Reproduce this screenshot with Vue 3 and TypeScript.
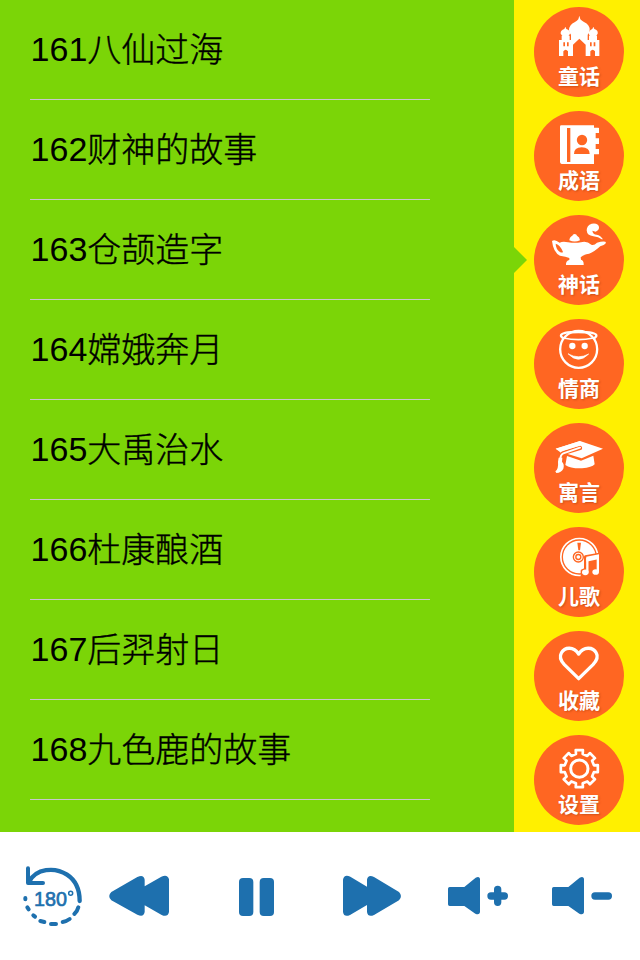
<script setup lang="ts">
import { ref } from 'vue'

interface Story { id: number; title: string }
interface Category { key: string; label: string }

const stories: Story[] = [
  { id: 161, title: '八仙过海' },
  { id: 162, title: '财神的故事' },
  { id: 163, title: '仓颉造字' },
  { id: 164, title: '嫦娥奔月' },
  { id: 165, title: '大禹治水' },
  { id: 166, title: '杜康酿酒' },
  { id: 167, title: '后羿射日' },
  { id: 168, title: '九色鹿的故事' },
]

const categories: Category[] = [
  { key: 'castle', label: '童话' },
  { key: 'book', label: '成语' },
  { key: 'lamp', label: '神话' },
  { key: 'angel', label: '情商' },
  { key: 'cap', label: '寓言' },
  { key: 'disc', label: '儿歌' },
  { key: 'heart', label: '收藏' },
  { key: 'gear', label: '设置' },
]

const active = ref('lamp')

/* Outline of an eight-toothed cog centred on (208, 122). */
function cogPath(): string {
  const points: string[] = []
  const profile: [number, number][] = [[-13, 45], [-11, 56.5], [11, 56.5], [13, 45]]
  for (let i = 0; i < 8; i++) {
    for (const [offset, radius] of profile) {
      const a = ((i * 45 + offset) * Math.PI) / 180
      points.push(`${(208 + radius * Math.sin(a)).toFixed(1)} ${(122 - radius * Math.cos(a)).toFixed(1)}`)
    }
  }
  return `M${points.join('L')}Z`
}
</script>

<template>
  <div class="app">
    <div class="main">
      <ul class="stories">
        <li v-for="s in stories" :key="s.id" class="story"><span>{{ s.id }}</span><span class="title">{{ s.title }}</span></li>
      </ul>
      <nav class="side">
        <div
          v-for="c in categories"
          :key="c.key"
          class="slot"
          :class="{ active: c.key === active }"
          @click="active = c.key"
        >
          <button class="category">
            <svg class="icon" viewBox="72 21 270 270">
              <g v-if="c.key === 'castle'" fill="#fff">
                <path d="M208 47L211 58Q216 63 222 66Q240 74 239 91Q238 99 233 104V120H268V168H227V134L208 116L189 134V168H147V120H183V104Q178 99 177 91Q177 74 195 66Q201 63 205 58Z" />
                <path d="M166 80L169 87Q181 90 180 101L175 109H158L152 101Q151 90 163 87ZM250 80L253 87Q265 91 263 101L258 109H240L236 101Q237 90 247 87Z" />
                <path d="M155 107H179V122H155ZM237 107H261V122H237Z" />
                <path d="M160 127h5v12h-5zM171 127h5v12h-5zM240 127h5v12h-5zM251 127h5v12h-5z" fill="#ff6622" />
                <path d="M160 169V154Q167 145 174 154V169ZM241 169V154Q248 145 255 154V169Z" fill="#ff6622" />
              </g>
              <g v-else-if="c.key === 'book'">
                <path d="M154 64H252V71H265Q267 71 267 73V87H257V103H267V120H257V135H267V149Q267 151 265 151H252V180H155Q150 179 150 174V68Q150 64 154 64Z" fill="#fff" />
                <path d="M171 72H181V174H171ZM192 150Q192 130 215 130Q239 130 239 150Z" fill="#ff6622" />
                <circle cx="216" cy="108" r="15.5" fill="#ff6622" />
              </g>
              <g v-else-if="c.key === 'lamp'" fill="#fff">
                <path fill-rule="evenodd" d="M126 99Q134 92 149 104Q159 99 174 103Q195 106 213 103Q230 98 244 110Q252 113 261 104Q277 99 286 101Q291 106 281 111Q270 113 262 122Q245 136 229 139Q216 143 212 148L213 155Q222 158 221 171H168Q167 159 178 156L178 150Q168 145 150 143Q130 134 126 99ZM137 107Q137 123 151 133Q157 135 159 132Q151 111 137 107Z" />
                <path d="M178 97Q179 86 187 83Q188 78 194 78Q200 78 201 83Q209 87 210 97Q194 104 178 97Z" />
                <path d="M275 94Q266 86 250 85Q231 83 230 67Q230 52 245 47Q265 44 267 57Q268 67 257 71L247 68Q249 80 260 80Q272 82 279 94Z" />
              </g>
              <g v-else-if="c.key === 'angel'" fill="none" stroke="#fff" stroke-width="7" stroke-linecap="round">
                <circle cx="206" cy="112" r="55.5" />
                <path d="M160 79Q152 75 153 70Q155 60 205 60Q257 60 259 70Q260 75 252 79" stroke-width="7" />
                <path d="M160 78Q205 88 250 78" stroke-width="5" />
                <path d="M175 126Q205 158 236 126Q206 143 175 126Z" stroke-width="2" stroke-linejoin="round" fill="#fff" />
                <circle cx="187" cy="102" r="9.5" fill="#fff" stroke="none" />
                <circle cx="224" cy="102" r="9.5" fill="#fff" stroke="none" />
              </g>
              <g v-else-if="c.key === 'cap'" fill="#fff">
                <path d="M137 98L210 75L279 98L215 127L166 112L153 115L149 105Z" />
                <path d="M171 120L213 134L250 119L254 145Q246 154 216 157Q181 158 166 147Z" />
                <path d="M210 96L163 110Q151 114 152 130" fill="none" stroke="#ff6622" stroke-width="13" stroke-linecap="round" />
                <path d="M137 98L210 75L216 86L150 108Z" />
                <path d="M210 95L160 112Q150 116 151 135" fill="none" stroke="#fff" stroke-width="6" stroke-linecap="round" />
                <path d="M146 125L157 125L156 137Q164 145 160 158Q154 170 139 171L136 166Q146 159 144 137Z" />
              </g>
              <g v-else-if="c.key === 'disc'" fill="none">
                <circle cx="208" cy="111" r="55.5" stroke="#fff" stroke-width="5" />
                <circle cx="208" cy="111" r="49" fill="#fff" />
                <circle cx="205" cy="111" r="15" stroke="#ff6622" stroke-width="4" />
                <circle cx="205" cy="111" r="7.5" stroke="#ff6622" stroke-width="4" />
                <path d="M202 68H213L210 91H205Z" fill="#ff6622" />
                <path d="M226 110L268 102V160L252 168L216 168V152L226 148Z" fill="#ff6622" stroke="#ff6622" stroke-width="8" stroke-linejoin="round" />
                <path d="M229 110L267 103V117L229 125Z" fill="#fff" />
                <path d="M232 113V157M263.500 107V155" stroke="#fff" stroke-width="7" />
                <ellipse cx="226" cy="157" rx="10" ry="8.500" fill="#fff" />
                <ellipse cx="257" cy="156" rx="10" ry="8.500" fill="#fff" />
              </g>
              <path
                v-else-if="c.key === 'heart'"
                d="M206 164L163 122C151 109 149 96 154 87C164 68 191 67 206 90C221 67 249 68 259 87C264 96 261 109 249 122Z"
                fill="none"
                stroke="#fff"
                stroke-width="10"
                stroke-linejoin="round"
              />
              <g v-else fill="none" stroke="#fff" stroke-linejoin="round">
                <path :d="cogPath()" stroke-width="8" />
                <circle cx="208" cy="122" r="26" stroke-width="9" />
              </g>
            </svg>
            <span class="label">{{ c.label }}</span>
          </button>
        </div>
      </nav>
    </div>

    <footer class="player">
      <svg class="control" viewBox="69 96 180 192" fill="none" stroke="#1e70ae" stroke-linecap="round" stroke-linejoin="round">
        <path d="M84 109V153H129" stroke-width="12" />
        <path d="M87 150C108 109 164 104 201 128Q239 153 239 207" stroke-width="13" />
        <path d="M76 198V202M82 226L86 232M100 250L105 254M121 267L133 270M153 276H168M188 270Q198 269 209 261M223 246Q232 238 235 226" stroke-width="12" />
        <text x="102" y="223" font-size="63" textLength="99" lengthAdjust="spacingAndGlyphs" fill="#1e70ae" stroke-width="2" class="degrees">180</text>
        <circle cx="212" cy="184" r="6" stroke-width="4.5" />
      </svg>
      <svg class="control" viewBox="327 96 180 192" fill="#1e70ae">
        <path d="M334 180L412 135Q431 126 434 143V163L484 134Q503 126 507 142V240Q503 257 485 249L434 220V240Q431 257 412 248L334 205Q321 193 334 180Z" />
      </svg>
      <svg class="control" viewBox="678 96 180 192" fill="#1e70ae">
        <rect x="717" y="138" width="43" height="114" rx="12" />
        <rect x="779" y="138" width="43" height="114" rx="12" />
      </svg>
      <svg class="control" viewBox="66 96 180 192" fill="#1e70ae">
        <path d="M237 180L162 135Q144 126 141 143V164L91 134Q72 126 69 143V240Q72 257 90 249L141 219V240Q144 257 162 249L237 205Q249 193 237 180Z" />
      </svg>
      <svg class="control" viewBox="384 96 180 192" fill="#1e70ae">
        <path d="M389 165H433L467 137Q478 132 480 140V241Q478 250 466 245L433 222H389Q384 222 384 217V170Q384 165 389 165Z" />
        <path d="M513 192H553M533 172V211" stroke="#1e70ae" stroke-width="22" stroke-linecap="round" />
      </svg>
      <svg class="control" viewBox="696 96 180 192" fill="#1e70ae">
        <path d="M701 165H745L779 137Q790 132 792 140V241Q790 250 778 245L745 222H701Q696 222 696 217V170Q696 165 701 165Z" />
        <path d="M825 192H865" stroke="#1e70ae" stroke-width="22" stroke-linecap="round" />
      </svg>
    </footer>
  </div>
</template>

<style>
body {
  margin: 0;
  background: #fff;
}
</style>

<style scoped>
.app {
  width: 640px;
  height: 960px;
  display: flex;
  flex-direction: column;
  overflow: hidden;
  background: #fff;
  font-family: "Liberation Sans", "Noto Sans CJK SC", sans-serif;
}
.main {
  display: flex;
  height: 832px;
}
.stories {
  width: 514px;
  box-sizing: border-box;
  margin: 0;
  padding: 0 84px 0 30px;
  list-style: none;
  background: #7bd507;
}
.story {
  display: flex;
  height: 100px;
  box-sizing: border-box;
  border-bottom: 1px solid #c8c7cc;
  padding-left: 0.6px;
  font-size: 34px;
  font-weight: 300;
  line-height: 99px;
  white-space: nowrap;
  color: #000;
}
.title {
  padding-top: 1px;
  -webkit-text-stroke: 0.4px #000;
}
.side {
  width: 126px;
  background: #fff000;
}
.slot {
  position: relative;
  height: 104px;
  box-sizing: border-box;
  padding: 7px 0 0 20px;
}
.slot.active::before {
  content: "";
  position: absolute;
  left: 0;
  top: 38.500px;
  border: 13.500px solid transparent;
  border-left-color: #7bd507;
  border-right-width: 0;
}
.category {
  display: grid;
  width: 90px;
  height: 90px;
  padding: 0;
  border: 0;
  border-radius: 50%;
  background: #ff6622;
}
.icon,
.label {
  grid-area: 1 / 1;
}
.icon {
  width: 90px;
  height: 90px;
}
.label {
  align-self: end;
  justify-self: center;
  margin-bottom: 7px;
  font-family: "Noto Sans CJK SC", sans-serif;
  font-size: 21px;
  font-weight: 700;
  line-height: 30px;
  color: #fff;
  text-shadow: 1px 1px 2px rgba(120, 40, 0, 0.35);
}
.player {
  display: grid;
  grid-template-columns: 86px 117px 116px 106px 104px 60px;
  height: 128px;
  box-sizing: border-box;
  padding: 32px 0 0 23px;
}
.control {
  width: 60px;
  height: 64px;
  overflow: visible;
}
.degrees {
  font-family: "Liberation Sans", sans-serif;
}
</style>
